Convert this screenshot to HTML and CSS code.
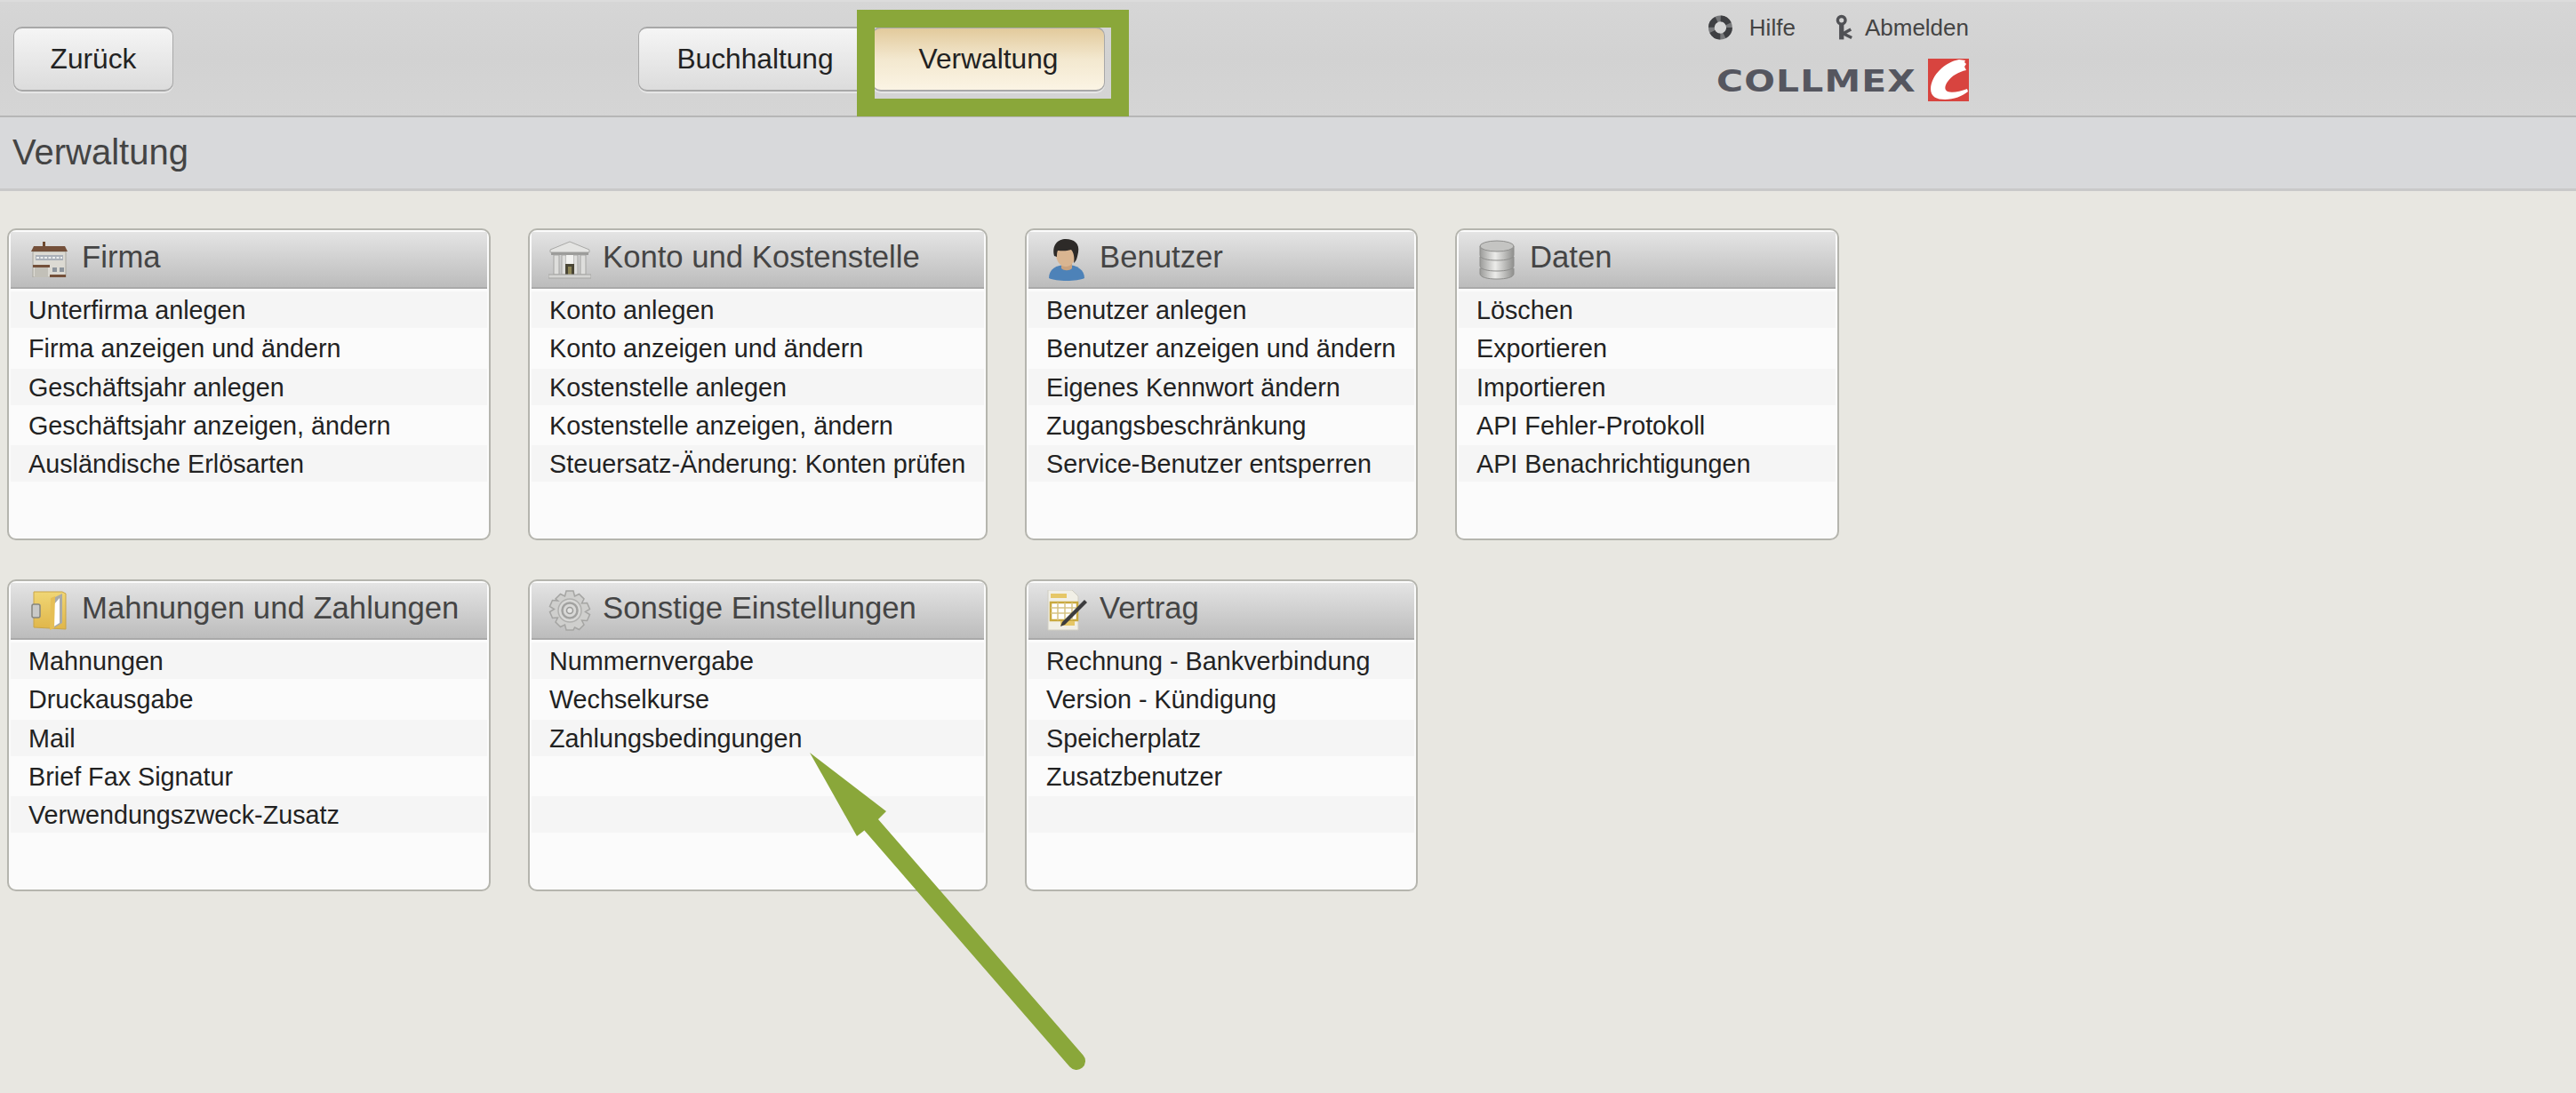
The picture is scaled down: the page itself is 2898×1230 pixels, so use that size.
FILE: index.html
```html
<!DOCTYPE html>
<html lang="de">
<head>
  <meta charset="UTF-8">
  <meta name="viewport" content="width=device-width, initial-scale=1.0">
  <title>Collmex - Verwaltung</title>
  <link rel="stylesheet" href="styles.css">
</head>
<body>
  <header class="topbar">
    <a class="btn btn-back">Zurück</a>
    <nav class="tabs">
      <a class="btn tab">Buchhaltung</a>
      <a class="btn tab tab-active">Verwaltung</a>
    </nav>
    <div class="utility">
      <div class="utility-links">
        <svg class="icon-help" viewBox="0 0 28 28">
          <circle cx="14" cy="14" r="10.5" fill="none" stroke="#77787a" stroke-width="7"/>
          <circle cx="14" cy="14" r="10.5" fill="none" stroke="#3e3f42" stroke-width="7" stroke-dasharray="11.5 5"/>
        </svg>
        <span class="help-label">Hilfe</span>
        <svg class="icon-key" viewBox="0 0 22 30">
          <circle cx="7" cy="6.500" r="4.500" fill="none" stroke="#505155" stroke-width="3.600"/>
          <path d="M7 11v18" stroke="#505155" stroke-width="5.500"/>
          <path d="M9 22l9-5M9 22l10 5" stroke="#505155" stroke-width="3.600"/>
        </svg>
        <span>Abmelden</span>
      </div>
      <div class="logo">
        <span class="logo-word">COLLMEX</span>
        <svg class="logo-mark" viewBox="0 0 46 48">
          <rect width="46" height="48" fill="#d8443f"/>
          <path d="M35 1c-16 3-31 17-32 33 0 9 7 12 16 12 10 0 20-4 26-9l-1-3c-8 3-17 5-22 3-4-2-3-7 0-11 5-7 12-11 21-13l-2-4 2-3-2-2 1-2z" fill="#fff"/>
        </svg>
      </div>
    </div>
  </header>

  <div class="pagetitle">Verwaltung</div>

  <main class="grid">
    <section class="card">
      <h2 class="card-head">
        <span class="card-icon">
          <svg width="43" height="40" viewBox="0 0 43 40">
            <path d="M3 11h37v29H3z" fill="#dcdad3" stroke="#a8a69e"/>
            <path d="M14 0h3v6h-3z" fill="#6e4a30"/>
            <path d="M4 5h35l3 6H1z" fill="#74503a"/>
            <path d="M6 15h31v6H6z" fill="#aab0b8"/>
            <path d="M7 18h29" stroke="#eceeef" stroke-width="2" stroke-dasharray="3 1.500"/>
            <path d="M3 26h19v3H3z" fill="#74503a"/>
            <path d="M5 29h15v11H5z" fill="#c2c0b8"/>
            <path d="M25 29h5v5h-5zM33 29h5v5h-5z" fill="#8d949c"/>
            <path d="M22 37h18v3H22z" fill="#74503a"/>
          </svg>
        </span>
        <span>Firma</span>
      </h2>
      <ul class="links">
        <li>Unterfirma anlegen</li>
        <li>Firma anzeigen und ändern</li>
        <li>Geschäftsjahr anlegen</li>
        <li>Geschäftsjahr anzeigen, ändern</li>
        <li>Ausländische Erlösarten</li>
      </ul>
    </section>

    <section class="card">
      <h2 class="card-head">
        <span class="card-icon">
          <svg width="48" height="43" viewBox="0 0 48 43">
            <path d="M24 1L46 10v3H2v-3z" fill="#e4e4e2" stroke="#a9a9a7" stroke-width="1"/>
            <path d="M3 13h42v3H3z" fill="#9c9c9a"/>
            <path d="M6 16h6v22H6zM15 16h5v22h-5zM28 16h5v22h-5zM36 16h6v22h-6z" fill="#dededc" stroke="#a5a5a3" stroke-width="1"/>
            <path d="M20 16h8v22h-8z" fill="#f2f2f0"/>
            <path d="M19 26h10v12H19z" fill="#4a4636"/>
            <path d="M22 29h4v9h-4z" fill="#8e8658"/>
            <path d="M0 38h48v4H0z" fill="#d5d5d3" stroke="#a5a5a3" stroke-width="1"/>
          </svg>
        </span>
        <span>Konto und Kostenstelle</span>
      </h2>
      <ul class="links">
        <li>Konto anlegen</li>
        <li>Konto anzeigen und ändern</li>
        <li>Kostenstelle anlegen</li>
        <li>Kostenstelle anzeigen, ändern</li>
        <li>Steuersatz-Änderung: Konten prüfen</li>
      </ul>
    </section>

    <section class="card">
      <h2 class="card-head">
        <span class="card-icon">
          <svg width="42" height="47" viewBox="0 0 42 47">
            <path d="M1 44c0-10 8-15 20-15s20 6 20 15c-8 4-32 4-40 0z" fill="#4d82b8"/>
            <path d="M15 26h12v7c-3 3-9 3-12 0z" fill="#c9a27e"/>
            <ellipse cx="20" cy="17" rx="11" ry="14" fill="#d9b591"/>
            <path d="M7 19C4 7 11 0 20 0s16 5 14 15c-1 5-2 10-5 12 1-6 0-12-3-15-6 2-12 1-15 1-1 2-1 4-1 7z" fill="#2d2a28"/>
          </svg>
        </span>
        <span>Benutzer</span>
      </h2>
      <ul class="links">
        <li>Benutzer anlegen</li>
        <li>Benutzer anzeigen und ändern</li>
        <li>Eigenes Kennwort ändern</li>
        <li>Zugangsbeschränkung</li>
        <li>Service-Benutzer entsperren</li>
      </ul>
    </section>

    <section class="card">
      <h2 class="card-head">
        <span class="card-icon">
          <svg width="40" height="45" viewBox="0 0 40 45">
            <defs>
              <linearGradient id="disk" x1="0" x2="1" y1="0" y2="0">
                <stop offset="0" stop-color="#9b9b99"/>
                <stop offset=".45" stop-color="#ececea"/>
                <stop offset="1" stop-color="#8f8f8d"/>
              </linearGradient>
            </defs>
            <path d="M1 32v6c0 4 8 6 19 6s19-2 19-6v-6z" fill="url(#disk)" stroke="#8e8e8c"/>
            <path d="M1 19v10c0 4 8 6 19 6s19-2 19-6V19z" fill="url(#disk)" stroke="#8e8e8c"/>
            <path d="M1 7v10c0 4 8 6 19 6s19-2 19-6V7z" fill="url(#disk)" stroke="#8e8e8c"/>
            <ellipse cx="20" cy="7" rx="19" ry="6" fill="#c4c4c2" stroke="#8e8e8c"/>
          </svg>
        </span>
        <span>Daten</span>
      </h2>
      <ul class="links">
        <li>Löschen</li>
        <li>Exportieren</li>
        <li>Importieren</li>
        <li>API Fehler-Protokoll</li>
        <li>API Benachrichtigungen</li>
      </ul>
    </section>

    <section class="card">
      <h2 class="card-head">
        <span class="card-icon">
          <svg width="40" height="45" viewBox="0 0 40 45">
            <defs>
              <linearGradient id="folder" x1="0" x2="0" y1="0" y2="1">
                <stop offset="0" stop-color="#f0d675"/>
                <stop offset="1" stop-color="#e0b64a"/>
              </linearGradient>
            </defs>
            <path d="M3 1h32l4 2v40l-36-2z" fill="url(#folder)" stroke="#c9a548"/>
            <path d="M27 7l8-4v33l-10 6z" fill="#a9aaa8"/>
            <path d="M25 16l7-8v28l-8 5z" fill="#fff"/>
            <path d="M22 8l-1 36 5-2 1-36z" fill="#e6bf55"/>
            <rect x="1" y="15" width="9" height="15" rx="2" fill="#c9c9c7" stroke="#85857f" stroke-width="1.500"/>
          </svg>
        </span>
        <span>Mahnungen und Zahlungen</span>
      </h2>
      <ul class="links">
        <li>Mahnungen</li>
        <li>Druckausgabe</li>
        <li>Mail</li>
        <li>Brief Fax Signatur</li>
        <li>Verwendungszweck-Zusatz</li>
      </ul>
    </section>

    <section class="card">
      <h2 class="card-head">
        <span class="card-icon">
          <svg width="48" height="46" viewBox="0 0 48 46">
            <g fill="#cfcfcd" stroke="#a5a5a3" stroke-width="1.500">
              <path d="M20 1h8l1.500 6 5-2.500 5.500 5.500-2.500 5 6-.5 3 7-5 3 5 3-3 7-6-.5 2.500 5-5.500 5.500-5-2.500L28 45h-8l-1.500-6-5 2.500L8 36l2.500-5-6 .5-3-7 5-3-5-3 3-7 6 .5L8 10l5.500-5.500 5 2.500z"/>
            </g>
            <circle cx="24" cy="23" r="13" fill="#d8d8d6" stroke="#b0b0ae" stroke-width="1.500"/>
            <circle cx="24" cy="23" r="8.500" fill="none" stroke="#a2a2a0" stroke-width="2.500"/>
            <circle cx="24" cy="23" r="3.500" fill="#e4e4e2" stroke="#9a9a98" stroke-width="1.500"/>
          </svg>
        </span>
        <span>Sonstige Einstellungen</span>
      </h2>
      <ul class="links">
        <li>Nummernvergabe</li>
        <li>Wechselkurse</li>
        <li>Zahlungsbedingungen</li>
        <li></li>
        <li></li>
      </ul>
    </section>

    <section class="card">
      <h2 class="card-head">
        <span class="card-icon">
          <svg width="47" height="46" viewBox="0 0 47 46">
            <path d="M2 0h27l7 7v38H2z" fill="#f1efe6" stroke="#cfcdc3"/>
            <path d="M5 4h18v5H5z" fill="#e6c766"/>
            <path d="M5 14h30v20H5z" fill="#fff" stroke="#c9a93f" stroke-width="2.500"/>
            <path d="M5 20h30M5 26h30M13 14v20M21 14v20M29 14v20" stroke="#d6c384" stroke-width="1.500"/>
            <path d="M16 35h16v5H16z" fill="#e6c766"/>
            <path d="M18 36L43 11l3 3-25 25-5 2z" fill="#3c3c3e"/>
          </svg>
        </span>
        <span>Vertrag</span>
      </h2>
      <ul class="links">
        <li>Rechnung - Bankverbindung</li>
        <li>Version - Kündigung</li>
        <li>Speicherplatz</li>
        <li>Zusatzbenutzer</li>
        <li></li>
      </ul>
    </section>
  </main>

  <!-- Markierung ueber dem Screenshot -->
  <div class="mark-box"></div>
  <svg class="mark-arrow" width="2898" height="1230" viewBox="0 0 2898 1230">
    <path d="M980 928L1211 1194" stroke="#8aa73a" stroke-width="20" stroke-linecap="round" fill="none"/>
    <path d="M911 847L997 913 988 922 973 934 964 941z" fill="#8aa73a"/>
  </svg>
</body>
</html>
```

FILE: styles.css
```css
html, body {
  margin: 0;
  padding: 0;
}
body {
  position: relative;
  width: 2898px;
  height: 1230px;
  overflow: hidden;
  font-family: "Liberation Sans", Arial, sans-serif;
  background-color: #e8e7e1;
  color: #222;
}

.topbar {
  display: flex;
  align-items: flex-start;
  box-sizing: border-box;
  height: 132px;
  padding-left: 15px;
  border-top: 2px solid #dcdcdc;
  border-bottom: 2px solid #b6b6b6;
  background: linear-gradient(#d6d6d6, #d2d2d2 50%, #d5d5d5);
}
.btn {
  display: block;
  box-sizing: border-box;
  height: 73px;
  border: 1px solid #a8a8a8;
  border-top-width: 2px;
  border-bottom-width: 2px;
  border-radius: 10px;
  background: linear-gradient(#f5f5f5, #dcdcdc);
  box-shadow: 0 2px 0 #e6e6e6;
  font-size: 31.7px;
  line-height: 69px;
  text-align: center;
  color: #222;
}
.btn-back {
  width: 180px;
  margin-top: 28px;
}
.tabs {
  display: flex;
  margin: 28px 0 0 523px;
}
.tab {
  width: 263px;
}
.tab-active {
  width: 262px;
  background: linear-gradient(#e2ca9c, #f3e8cf 50%, #fbf4e4);
}

.utility {
  width: 293px;
  margin: 14px 0 0 679px;
  color: #444;
  font-size: 26px;
}
.utility-links {
  display: flex;
  align-items: center;
  height: 30px;
}
.icon-help {
  width: 28px;
  height: 28px;
}
.help-label {
  margin-left: 19px;
}
.icon-key {
  width: 22px;
  height: 30px;
  margin: 0 12px 0 45px;
}
.logo {
  display: flex;
  align-items: center;
  margin-top: 20px;
  padding-left: 9px;
}
.logo-word {
  width: 238px;
  padding-top: 3px;
  font-family: "DejaVu Sans", sans-serif;
  font-weight: bold;
  font-size: 34px;
  line-height: 45px;
  letter-spacing: 1px;
  color: #55565f;
  transform: scaleX(1.2);
  transform-origin: left center;
}
.logo-mark {
  width: 46px;
  height: 48px;
}

.pagetitle {
  box-sizing: border-box;
  height: 83px;
  padding: 0 14px;
  border-bottom: 3px solid #c9c9c9;
  background-color: #d8d9db;
  font-size: 40px;
  line-height: 79px;
  color: #444;
}

.grid {
  display: grid;
  grid-template-columns: 544px 517px 442px 432px;
  grid-auto-rows: 351px;
  gap: 44px 42px;
  padding: 42px 0 0 8px;
}
.card {
  box-sizing: border-box;
  padding: 2px;
  border: 2px solid #b5b5ae;
  border-radius: 10px;
  background-color: #fbfbfb;
}
.card-head {
  display: flex;
  align-items: center;
  box-sizing: border-box;
  height: 64px;
  margin: 0;
  border-bottom: 2px solid #a9a9a9;
  background: linear-gradient(#e4e4e4, #bcbcbc);
  font-size: 34.7px;
  font-weight: normal;
  color: #454545;
}
.card-head > span:last-child {
  padding-bottom: 6px;
}
.card-icon {
  display: flex;
  justify-content: center;
  flex: none;
  width: 52px;
  margin: 0 11px 0 17px;
}
.links {
  margin: 1px 0 0;
  padding: 0;
  list-style: none;
}
.links li {
  box-sizing: border-box;
  height: 43.3px;
  padding-left: 20px;
  border-top: 2px solid #fbfbfb;
  font-size: 28.75px;
  line-height: 43px;
  background-clip: padding-box;
}
.links li:nth-child(odd) {
  background-color: #f5f5f5;
}

.mark-box {
  position: absolute;
  left: 964px;
  top: 11px;
  box-sizing: border-box;
  width: 306px;
  height: 120px;
  border: 20px solid #8aa73a;
}
.mark-arrow {
  position: absolute;
  left: 0;
  top: 0;
  pointer-events: none;
}
```
